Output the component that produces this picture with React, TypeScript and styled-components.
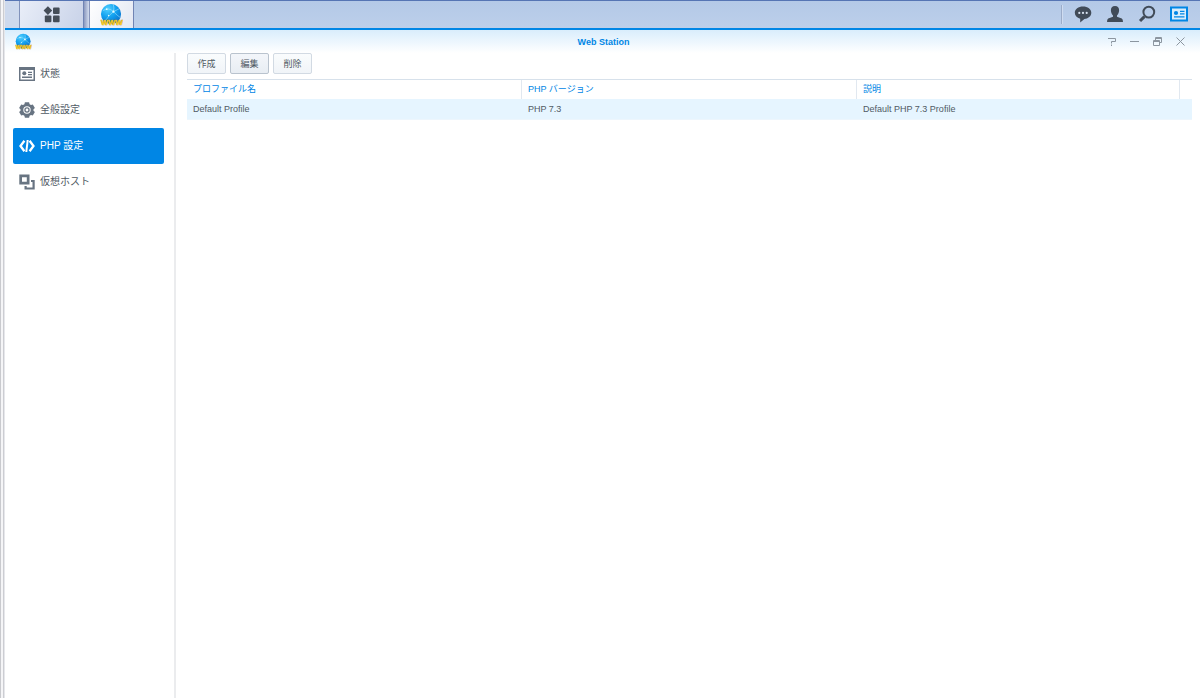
import React from "react";
import styled, { createGlobalStyle } from "styled-components";

const GlobalStyle = createGlobalStyle`
  *, *::before, *::after { box-sizing: border-box; }
  body {
    margin: 0;
    background: #fff;
    color: #50565e;
    font-family: "Liberation Sans", "Noto Sans CJK JP", sans-serif;
    font-size: 10px;
  }
  button { font-family: inherit; cursor: pointer; }
`;

const Screen = styled.div`
  display: flex;
  min-height: 100vh;
`;

const Edge = styled.div`
  flex: none;
  width: 5px;
  background: linear-gradient(90deg, #c9cace 0 1px, #f5f5f7 1px 3px, #cccdd2 3px 4px, #e6e7eb 4px 5px);
`;

const Desktop = styled.div`
  flex: 1;
  min-width: 0;
  display: flex;
  flex-direction: column;
`;

const Taskbar = styled.header`
  display: flex;
  align-items: stretch;
  height: 30px;
  border-top: 1px solid #5675b4;
  border-bottom: 2px solid #0086e5;
  background: linear-gradient(#b4c9e7, #bccfea);
`;

const TaskLead = styled.div`
  width: 15px;
  background: #cdd9ed;
  border-right: 1px solid #8092bb;
`;

const TaskButton = styled.button<{ $width: number; $active?: boolean }>`
  display: flex;
  align-items: center;
  justify-content: center;
  width: ${(p) => p.$width}px;
  padding: 0;
  border: 0;
  border-right: 1px solid #7084b4;
  background: ${(p) =>
    p.$active ? "linear-gradient(120deg, #ffffff, #e2e7f2)" : "linear-gradient(115deg, #e9eef8, #c8d2e8)"};
`;

const TaskShade = styled.div`
  width: 6px;
  border-right: 1px solid #8795bb;
  background: linear-gradient(90deg, #8b99bf, #d3ddef);
`;

const Tray = styled.div`
  display: flex;
  align-items: flex-start;
  margin: 0 5px 0 auto;
`;

const TraySeparator = styled.div`
  width: 2px;
  height: 19px;
  margin: 4px 4px 0 0;
  border-left: 1px solid #9bacc9;
  border-right: 1px solid #cfdcf0;
`;

const TrayButton = styled.button`
  display: flex;
  align-items: center;
  justify-content: center;
  width: 32px;
  height: 26px;
  padding: 0;
  border: 0;
  background: none;
`;

const TitleBar = styled.div`
  display: grid;
  grid-template-columns: 1fr auto 1fr;
  align-items: center;
  height: 23px;
  padding: 0 8px 0 10px;
  background: linear-gradient(#d9edfc, #ffffff);
`;

const Title = styled.h1`
  margin: 0;
  color: #0086e5;
  font-size: 9px;
  line-height: 16px;
  font-weight: bold;
`;

const WindowControls = styled.div`
  display: flex;
  justify-content: flex-end;
`;

const WindowButton = styled.button`
  display: flex;
  align-items: center;
  justify-content: center;
  width: 23px;
  height: 20px;
  padding: 0;
  border: 0;
  background: none;
  color: #8c96a0;
`;

const Body = styled.div`
  flex: 1;
  display: flex;
`;

const Sidebar = styled.nav`
  flex: none;
  width: 171px;
  padding: 3px 10px 0 8px;
  border-right: 2px solid #ebecee;
`;

const NavItem = styled.button<{ $active?: boolean }>`
  display: flex;
  align-items: center;
  gap: 5px;
  width: 100%;
  height: 36px;
  padding: 0 6px;
  border: 0;
  border-radius: 2px;
  background: ${(p) => (p.$active ? "#0086e5" : "transparent")};
  color: ${(p) => (p.$active ? "#fff" : "#505a64")};
  font-size: 10px;
  line-height: 16px;

  svg { color: ${(p) => (p.$active ? "#fff" : "#687482")}; }
`;

const Main = styled.main`
  flex: 1;
  min-width: 0;
  padding: 0 8px 0 11px;
`;

const Toolbar = styled.div`
  display: flex;
  gap: 4px;
  margin-bottom: 5px;
`;

const ToolButton = styled.button<{ $focused?: boolean }>`
  width: 39px;
  height: 21px;
  padding: 0;
  border: 1px solid ${(p) => (p.$focused ? "#b9c3ce" : "#d2dae3")};
  border-radius: 2px;
  background: ${(p) => (p.$focused ? "linear-gradient(#f3f6fa, #e8edf3)" : "linear-gradient(#fafcfd, #f0f4f8)")};
  color: #505a64;
  font-size: 9px;
  line-height: 16px;
`;

const Table = styled.table`
  width: 100%;
  table-layout: fixed;
  border-collapse: separate;
  border-spacing: 0;
  border-top: 1px solid #d7e1eb;
  text-align: left;
`;

const HeadCell = styled.th<{ $width?: string }>`
  width: ${(p) => p.$width ?? "auto"};
  height: 19px;
  padding: 0 6px 1px;
  border-right: 1px solid #e1e8f0;
  color: #0086e5;
  font-size: 9px;
  line-height: 16px;
  font-weight: normal;

  &:last-child { border-right: 0; }
`;

const Cell = styled.td`
  height: 21px;
  padding: 0 6px;
  background: #e6f5ff;
  border-bottom: 1px solid #edf6fd;
  color: #505a64;
  font-size: 9px;
  line-height: 16px;
`;

const Globe = ({ size }: { size: number }) => (
  <svg width={size} height={size} viewBox="0 0 24 24" aria-hidden="true">
    <defs>
      <radialGradient id={`sea${size}`} cx="0.35" cy="0.25" r="0.8">
        <stop offset="0" stopColor="#52d0ff" />
        <stop offset="0.5" stopColor="#13a2f0" />
        <stop offset="1" stopColor="#0872cd" />
      </radialGradient>
    </defs>
    <circle cx="11.5" cy="11.5" r="10.5" fill={`url(#sea${size})`} />
    <g fill="none" stroke="#b5ecff" strokeWidth="0.7" opacity="0.75">
      <path d="M3 8Q9 4 14 9T21 15M14 9Q10 12 6 18M14 9Q15 5 14 2M14 9L20 6" />
    </g>
    <g fill="#e4faff">
      <circle cx="14" cy="9" r="1.2" />
      <circle cx="7" cy="6.5" r="0.9" />
      <circle cx="9" cy="13" r="0.8" />
    </g>
    <text
      x="12.3"
      y="22.8"
      textAnchor="middle"
      fontFamily="Liberation Sans, sans-serif"
      fontSize="8"
      fontWeight="bold"
      fill="#ffd21f"
      stroke="#a8872a"
      strokeWidth="0.7"
      paintOrder="stroke"
    >
      WWW
    </text>
  </svg>
);

const CardIcon = () => (
  <svg width="16" height="16" viewBox="0 0 16 16" fill="currentColor" aria-hidden="true">
    <path fillRule="evenodd" d="M0 1H16V15H0ZM1.5 4V13.5H14.5V4Z" />
    <circle cx="5.3" cy="7.3" r="2" />
    <path d="M9 5.8H13V7H9ZM9 8H13V9.2H9ZM3 10.6H13V11.9H3Z" />
  </svg>
);

const GearIcon = () => (
  <svg width="16" height="16" viewBox="0 0 16 16" fill="currentColor" aria-hidden="true">
    <path
      fillRule="evenodd"
      d="M5.9 0.3H10.1L10.6 2.2L12 3L13.8 2.4L15.9 6L14.5 7.2V8.8L15.9 10L13.8 13.6L12 13L10.6 13.8L10.1 15.7H5.9L5.4 13.8L4 13L2.2 13.6L0.1 10L1.5 8.8V7.2L0.1 6L2.2 2.4L4 3L5.4 2.2ZM8 4.3A3.7 3.7 0 1 0 8 11.7A3.7 3.7 0 1 0 8 4.3ZM8 5.3A2.7 2.7 0 1 1 8 10.7A2.7 2.7 0 1 1 8 5.3ZM8 6.6A1.4 1.4 0 1 0 8 9.4A1.4 1.4 0 1 0 8 6.6Z"
    />
  </svg>
);

const CodeIcon = () => (
  <svg width="16" height="16" viewBox="0 0 16 16" fill="none" stroke="currentColor" strokeWidth="2.3" aria-hidden="true">
    <path d="M5.4 2.8L1.5 8L5.4 13.2M10.6 2.8L14.5 8L10.6 13.2" />
    <path d="M8.7 2L7.3 14" strokeWidth="2" />
  </svg>
);

const HostIcon = () => (
  <svg width="16" height="16" viewBox="0 0 16 16" fill="currentColor" aria-hidden="true">
    <path fillRule="evenodd" d="M0.3 0.5H10.5V10.5H0.3ZM3 3.2V7.8H7.8V3.2Z" />
    <path d="M12 6H15.7V15.5H5.5V12H7.7V13.4H13.5V8H12Z" />
  </svg>
);

const MenuIcon = () => (
  <svg width="18" height="18" viewBox="0 0 18 18" fill="#454d58" aria-hidden="true">
    <path d="M4.9 0.3L9.2 4.6L4.9 8.9L0.6 4.6Z" />
    <rect x="10" y="1.4" width="6.6" height="6.6" rx="1" />
    <rect x="1.8" y="9.6" width="6.6" height="6.6" rx="1" />
    <rect x="10" y="9.6" width="6.6" height="6.6" rx="1" />
  </svg>
);

const ChatIcon = () => (
  <svg width="18" height="18" viewBox="0 0 18 18" aria-hidden="true">
    <path fill="#414b58" d="M9 1.5C13.8 1.5 17.3 4 17.3 7.8C17.3 11.2 14 13.8 10.4 14L6.2 17.4V13.7C3 12.8 0.8 10.7 0.8 7.8C0.8 4 4.4 1.5 9 1.5Z" />
    <g fill="#d8e2f0">
      <circle cx="5.3" cy="7.9" r="1.1" />
      <circle cx="9" cy="7.9" r="1.1" />
      <circle cx="12.7" cy="7.9" r="1.1" />
    </g>
  </svg>
);

const UserIcon = () => (
  <svg width="18" height="18" viewBox="0 0 18 18" fill="#414b58" aria-hidden="true">
    <path d="M9 1C11.9 1 13.1 2.7 13.1 5.2C13.1 7.4 12.2 9.2 11 10.4V11.8L15.8 13.4Q17 14.2 17 17H1Q1 14.2 2.2 13.4L7 11.8V10.4C5.8 9.2 4.9 7.4 4.9 5.2C4.9 2.7 6.1 1 9 1Z" />
  </svg>
);

const SearchIcon = () => (
  <svg width="18" height="18" viewBox="0 0 18 18" fill="none" stroke="#414b58" aria-hidden="true">
    <circle cx="10.8" cy="7.1" r="5.4" strokeWidth="2" />
    <path d="M6.4 11.6L2 16" strokeWidth="3" />
  </svg>
);

const WidgetIcon = () => (
  <svg width="18" height="16" viewBox="0 0 18 16" aria-hidden="true">
    <rect x="1" y="1.5" width="16" height="13" fill="#d9edfb" stroke="#0086e5" strokeWidth="2" />
    <g fill="#0086e5">
      <circle cx="6" cy="7" r="2.1" />
      <path d="M10 4.8H14.5V6H10ZM10 7.3H14.5V8.5H10ZM4 10.3H14.5V11.6H4Z" />
    </g>
  </svg>
);

const controls = [
  { label: "Help", path: "M2 2.5H9.5V5.5H5.5V7.5M5.5 8.5V10" },
  { label: "Minimize", path: "M1 5.5H10" },
  { label: "Restore", path: "M3.5 4V1.5H9.5V6.5H8M3.5 2.5H9.5M1.5 4.5H7.5V9.5H1.5ZM1.5 5.5H7.5" },
  { label: "Close", path: "M1.5 1.5L9.5 9.5M9.5 1.5L1.5 9.5" },
];

const navItems = [
  { label: "状態", icon: <CardIcon /> },
  { label: "全般設定", icon: <GearIcon /> },
  { label: "PHP 設定", icon: <CodeIcon />, active: true },
  { label: "仮想ホスト", icon: <HostIcon /> },
];

const profiles = [{ name: "Default Profile", version: "PHP 7.3", description: "Default PHP 7.3 Profile" }];

export default function App() {
  return (
    <>
      <GlobalStyle />
      <Screen>
        <Edge />
        <Desktop>
          <Taskbar>
            <TaskLead />
            <TaskButton $width={64} aria-label="Main menu"><MenuIcon /></TaskButton>
            <TaskShade />
            <TaskButton $width={44} $active aria-label="Web Station"><Globe size={23} /></TaskButton>
            <Tray>
              <TraySeparator />
              <TrayButton aria-label="Notifications"><ChatIcon /></TrayButton>
              <TrayButton aria-label="Options"><UserIcon /></TrayButton>
              <TrayButton aria-label="Search"><SearchIcon /></TrayButton>
              <TrayButton aria-label="Widgets"><WidgetIcon /></TrayButton>
            </Tray>
          </Taskbar>
          <TitleBar>
            <Globe size={17} />
            <Title>Web Station</Title>
            <WindowControls>
              {controls.map((c) => (
                <WindowButton key={c.label} aria-label={c.label}>
                  <svg width="11" height="11" viewBox="0 0 11 11" fill="none" stroke="currentColor" aria-hidden="true">
                    <path d={c.path} />
                  </svg>
                </WindowButton>
              ))}
            </WindowControls>
          </TitleBar>
          <Body>
            <Sidebar>
              {navItems.map((item) => (
                <NavItem key={item.label} $active={item.active} aria-current={item.active ? "page" : undefined}>
                  {item.icon}
                  {item.label}
                </NavItem>
              ))}
            </Sidebar>
            <Main>
              <Toolbar>
                <ToolButton>作成</ToolButton>
                <ToolButton $focused>編集</ToolButton>
                <ToolButton>削除</ToolButton>
              </Toolbar>
              <Table>
                <thead>
                  <tr>
                    <HeadCell $width="calc(100% / 3)">プロファイル名</HeadCell>
                    <HeadCell $width="calc(100% / 3)">PHP バージョン</HeadCell>
                    <HeadCell>説明</HeadCell>
                    <HeadCell $width="12px" aria-hidden="true" />
                  </tr>
                </thead>
                <tbody>
                  {profiles.map((p) => (
                    <tr key={p.name}>
                      <Cell>{p.name}</Cell>
                      <Cell>{p.version}</Cell>
                      <Cell colSpan={2}>{p.description}</Cell>
                    </tr>
                  ))}
                </tbody>
              </Table>
            </Main>
          </Body>
        </Desktop>
      </Screen>
    </>
  );
}
